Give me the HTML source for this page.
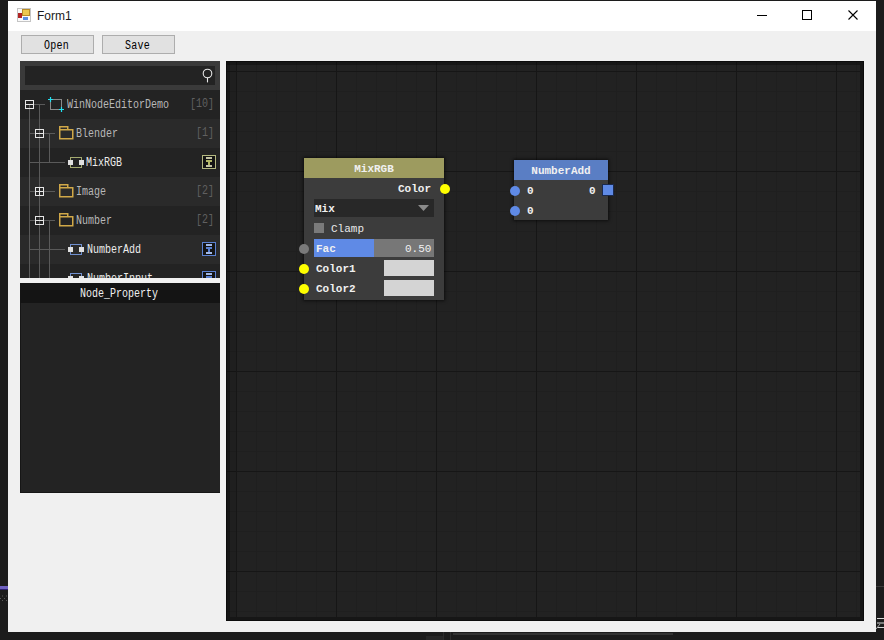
<!DOCTYPE html>
<html><head><meta charset="utf-8">
<style>
*{margin:0;padding:0;box-sizing:border-box}
html,body{width:884px;height:640px;overflow:hidden;background:#1c1c1c;position:relative}
.a{position:absolute}
.mono{font-family:"Liberation Mono",monospace}
.sans{font-family:"Liberation Sans",sans-serif}
#win{left:8px;top:1px;width:868px;height:631px;background:#f0f0f0}
#title{left:8px;top:1px;width:868px;height:30px;background:#fff}
.btn{height:19px;width:73px;top:35px;background:#e1e1e1;border:1px solid #adadad;color:#000}
.bt{position:absolute;left:0;width:71px;top:3px;font-family:"Liberation Mono",monospace;font-size:10px;line-height:12px;text-align:center;text-indent:-2px;transform:scaleY(1.2);transform-origin:0 0;letter-spacing:0.3px}
#tree{left:20px;top:61px;width:200px;height:217px;background:#232323;overflow:hidden}
#prop{left:20px;top:283px;width:200px;height:210px;background:#232323;border-left:1px solid #161616;border-bottom:1px solid #161616}
.row{position:absolute;left:0;width:200px;height:29px}
.rl{background:#2a2a2a}
.tt{position:absolute;font-family:"Liberation Mono",monospace;font-size:10px;line-height:12px;white-space:nowrap;transform:scaleY(1.2);transform-origin:0 0}
.ln{position:absolute;background:#5a5a5a}
.box{position:absolute;width:9px;height:9px;border:1px solid #e6e6e6;background:#232323}
#canvas{left:226px;top:61px;width:638px;height:560px;background:#222}
.node{position:absolute}
.nt{position:absolute;font-family:"Liberation Mono",monospace;font-weight:bold;font-size:11px;white-space:nowrap;line-height:12px}
.dot{position:absolute;width:10px;height:10px;border-radius:50%}
</style></head><body>
<div class="a" id="win"></div>
<!-- outside artifacts -->
<div class="a" style="left:0;top:586px;width:8px;height:3px;background:#6e60c0"></div>
<div class="a" style="left:0;top:589px;width:8px;height:1px;background:#2c2070"></div>
<svg class="a" style="left:0;top:595px" width="8" height="7"><path d="M2 1h1M6 1h1M0 3.5h1M4 3.5h1M2 5.5h1M6 5.5h1" stroke="#5a5a5a"/></svg>
<div class="a" style="left:876px;top:586px;width:8px;height:1px;background:#3a3a3a"></div>
<svg class="a" style="left:876px;top:615px" width="8" height="15"><path d="M1 3.5H8M1 8H8M1 12.5H8" stroke="#d8d8d8"/><path d="M0 14L4 9" stroke="#a0a0a0"/></svg>
<div class="a" style="left:453px;top:633px;width:220px;height:2px;background:#333"></div>
<div class="a" style="left:443px;top:632px;width:1px;height:8px;background:#2c2c2c"></div>
<div class="a" style="left:450px;top:632px;width:1px;height:8px;background:#2c2c2c"></div>
<div class="a" style="left:426px;top:636px;width:17px;height:4px;background:#262626"></div>

<div class="a" id="title"></div>
<!-- title icon -->
<div class="a" style="left:17px;top:8px;width:14px;height:14px;border:1px solid #c4c4c4;background:#fafafa"></div>
<div class="a" style="left:18px;top:13px;width:4px;height:5px;background:#b02424"></div>
<div class="a" style="left:22px;top:9px;width:8px;height:7px;background:#ecc850;border:1px solid #b88c28"></div>
<div class="a" style="left:23px;top:17px;width:5px;height:3px;background:#5c8ee0"></div>
<div class="a sans" style="left:37px;top:8px;font-size:12px;color:#1a1a1a;line-height:16px">Form1</div>
<!-- window controls -->
<div class="a" style="left:757px;top:15px;width:10px;height:1px;background:#000"></div>
<div class="a" style="left:802px;top:10px;width:10px;height:10px;border:1px solid #000"></div>
<svg class="a" style="left:848px;top:10px" width="11" height="11"><path d="M0.5 0.5L9.5 9.5M9.5 0.5L0.5 9.5" stroke="#000" stroke-width="1.1"/></svg>

<div class="a btn" style="left:21px"><div class="bt">Open</div></div>
<div class="a btn" style="left:102px"><div class="bt">Save</div></div>

<!-- tree panel -->
<div class="a" id="tree">
  <div class="a" style="left:0;top:0;width:200px;height:29px;background:#3a3a3a"></div>
  <div class="a" style="left:5px;top:5px;width:190px;height:19px;background:#232323"></div>
  <svg class="a" style="left:200px;top:0" width="1" height="1"></svg>
  <svg class="a" style="left:181px;top:6px" width="14" height="18"><circle cx="6.5" cy="6.5" r="4.3" fill="none" stroke="#e8e8e8" stroke-width="1.1"/><path d="M6.5 10.8v4.6" stroke="#e8e8e8" stroke-width="1.1"/></svg>
  <div class="row" style="top:29px"></div>
  <div class="row rl" style="top:58px"></div>
  <div class="row" style="top:87px"></div>
  <div class="row rl" style="top:116px"></div>
  <div class="row" style="top:145px"></div>
  <div class="row rl" style="top:174px"></div>
  <div class="row" style="top:203px"></div>
<div class="ln" style="left:9px;top:44px;width:1px;height:173px"></div>
<div class="ln" style="left:19px;top:43px;width:1px;height:174px"></div>
<div class="ln" style="left:29px;top:72px;width:1px;height:30px"></div>
<div class="ln" style="left:29px;top:159px;width:1px;height:58px"></div>
<div class="ln" style="left:14px;top:43px;width:11px;height:1px"></div>
<div class="ln" style="left:9px;top:72px;width:6px;height:1px"></div>
<div class="ln" style="left:24px;top:72px;width:11px;height:1px"></div>
<div class="ln" style="left:9px;top:101px;width:36px;height:1px"></div>
<div class="ln" style="left:9px;top:130px;width:6px;height:1px"></div>
<div class="ln" style="left:24px;top:130px;width:11px;height:1px"></div>
<div class="ln" style="left:9px;top:159px;width:6px;height:1px"></div>
<div class="ln" style="left:24px;top:159px;width:11px;height:1px"></div>
<div class="ln" style="left:9px;top:188px;width:36px;height:1px"></div>
<div class="ln" style="left:9px;top:217px;width:36px;height:1px"></div>
<svg class="a" style="left:5px;top:39px" width="9" height="9"><rect x=".5" y=".5" width="8" height="8" fill="none" stroke="#e6e6e6"/><path d="M1 4.5H8" stroke="#e6e6e6"/></svg>
<svg class="a" style="left:28px;top:36px" width="17" height="16"><rect x="2.5" y="2.5" width="11" height="10" fill="none" stroke="#8a8a8a"/><path d="M2.5 0V5M0 2.5H5M13.5 10V15M11 12.5H16" stroke="#20e0f0" stroke-width="1.2"/></svg>
<div class="tt" style="left:47px;top:37px;color:#b8b8b8">WinNodeEditorDemo</div>
<div class="tt" style="left:170px;top:36px;color:#606060">[10]</div>
<svg class="a" style="left:15px;top:68px" width="9" height="9"><rect x=".5" y=".5" width="8" height="8" fill="none" stroke="#e6e6e6"/><path d="M1 4.5H8" stroke="#e6e6e6"/></svg>
<svg class="a" style="left:39px;top:65px" width="15" height="14"><path d="M.75 3.75H13.75V12.75H.75Z" fill="none" stroke="#d0a848" stroke-width="1.5"/><path d="M.75 3.75V.75H8.75V3.75" fill="none" stroke="#d0a848" stroke-width="1.5"/></svg>
<div class="tt" style="left:56px;top:66px;color:#b8b8b8">Blender</div>
<div class="tt" style="left:176px;top:65px;color:#606060">[1]</div>
<svg class="a" style="left:48px;top:96px" width="17" height="12"><rect x="2.5" y=".5" width="11" height="10" fill="none" stroke="#a4aa70"/><rect x="0" y="3" width="5" height="5" fill="#e0e0e0"/><rect x="11" y="3" width="5" height="5" fill="#e0e0e0"/></svg>
<div class="tt" style="left:66px;top:95px;color:#ececec">MixRGB</div>
<svg class="a" style="left:182px;top:94px" width="14" height="14"><rect x=".5" y=".5" width="13" height="13" fill="#141414" stroke="#b4b880"/><rect x="4" y="2" width="6" height="2" fill="#c4c4a4"/><rect x="4" y="5" width="6" height="2" fill="#b4b868"/><rect x="6" y="7" width="2" height="3" fill="#b4b868"/><rect x="4" y="10" width="6" height="2" fill="#c4c4a4"/></svg>
<svg class="a" style="left:15px;top:126px" width="9" height="9"><rect x=".5" y=".5" width="8" height="8" fill="#2a2a2a" stroke="#e6e6e6"/><path d="M1 4.5H8M4.5 1V8" stroke="#e6e6e6"/></svg>
<svg class="a" style="left:39px;top:123px" width="15" height="14"><path d="M.75 3.75H13.75V12.75H.75Z" fill="none" stroke="#d0a848" stroke-width="1.5"/><path d="M.75 3.75V.75H8.75V3.75" fill="none" stroke="#d0a848" stroke-width="1.5"/></svg>
<div class="tt" style="left:56px;top:124px;color:#b8b8b8">Image</div>
<div class="tt" style="left:176px;top:123px;color:#606060">[2]</div>
<svg class="a" style="left:15px;top:155px" width="9" height="9"><rect x=".5" y=".5" width="8" height="8" fill="none" stroke="#e6e6e6"/><path d="M1 4.5H8" stroke="#e6e6e6"/></svg>
<svg class="a" style="left:39px;top:152px" width="15" height="14"><path d="M.75 3.75H13.75V12.75H.75Z" fill="none" stroke="#d0a848" stroke-width="1.5"/><path d="M.75 3.75V.75H8.75V3.75" fill="none" stroke="#d0a848" stroke-width="1.5"/></svg>
<div class="tt" style="left:56px;top:153px;color:#b8b8b8">Number</div>
<div class="tt" style="left:176px;top:152px;color:#606060">[2]</div>
<svg class="a" style="left:48px;top:183px" width="17" height="12"><rect x="2.5" y=".5" width="11" height="10" fill="none" stroke="#7090d0"/><rect x="0" y="3" width="5" height="5" fill="#e0e0e0"/><rect x="11" y="3" width="5" height="5" fill="#e0e0e0"/></svg>
<div class="tt" style="left:67px;top:182px;color:#ececec">NumberAdd</div>
<svg class="a" style="left:182px;top:181px" width="14" height="14"><rect x=".5" y=".5" width="13" height="13" fill="#141414" stroke="#5a80d0"/><rect x="4" y="2" width="6" height="2" fill="#a0b8e8"/><rect x="4" y="5" width="6" height="2" fill="#5a80d0"/><rect x="6" y="7" width="2" height="3" fill="#5a80d0"/><rect x="4" y="10" width="6" height="2" fill="#a0b8e8"/></svg>
<svg class="a" style="left:48px;top:212px" width="17" height="12"><rect x="2.5" y=".5" width="11" height="10" fill="none" stroke="#7090d0"/><rect x="0" y="3" width="5" height="5" fill="#e0e0e0"/><rect x="11" y="3" width="5" height="5" fill="#e0e0e0"/></svg>
<div class="tt" style="left:67px;top:211px;color:#ececec">NumberInput</div>
<svg class="a" style="left:182px;top:210px" width="14" height="14"><rect x=".5" y=".5" width="13" height="13" fill="#141414" stroke="#5a80d0"/><rect x="4" y="2" width="6" height="2" fill="#a0b8e8"/><rect x="4" y="5" width="6" height="2" fill="#5a80d0"/><rect x="6" y="7" width="2" height="3" fill="#5a80d0"/><rect x="4" y="10" width="6" height="2" fill="#a0b8e8"/></svg>
</div>
<!-- property panel -->
<div class="a" id="prop">
  <div class="a" style="left:-1px;top:0;width:200px;height:20px;background:#141414"></div>
  <div class="tt" style="left:-2px;width:200px;text-align:center;top:4px;color:#f0f0f0">Node_Property</div>
</div>

<!-- canvas -->
<svg class="a" style="left:226px;top:61px" width="638" height="560"><rect width="638" height="560" fill="#222"/><path d="M30.5 0V560M50.5 0V560M70.5 0V560M90.5 0V560M130.5 0V560M150.5 0V560M170.5 0V560M190.5 0V560M230.5 0V560M250.5 0V560M270.5 0V560M290.5 0V560M330.5 0V560M350.5 0V560M370.5 0V560M390.5 0V560M430.5 0V560M450.5 0V560M470.5 0V560M490.5 0V560M530.5 0V560M550.5 0V560M570.5 0V560M590.5 0V560M630.5 0V560M0 30.5H638M0 50.5H638M0 70.5H638M0 90.5H638M0 130.5H638M0 150.5H638M0 170.5H638M0 190.5H638M0 230.5H638M0 250.5H638M0 270.5H638M0 290.5H638M0 330.5H638M0 350.5H638M0 370.5H638M0 390.5H638M0 430.5H638M0 450.5H638M0 470.5H638M0 490.5H638M0 530.5H638M0 550.5H638" stroke="#1f1f1f" stroke-width="1"/><path d="M10.5 0V560M110.5 0V560M210.5 0V560M310.5 0V560M410.5 0V560M510.5 0V560M610.5 0V560M0 10.5H638M0 110.5H638M0 210.5H638M0 310.5H638M0 410.5H638M0 510.5H638" stroke="#161616" stroke-width="1"/><rect x="1" y="1" width="636" height="3" fill="#000" fill-opacity=".3"/><rect x="1" y="1" width="3" height="558" fill="#000" fill-opacity=".35"/><rect x="4" y="4" width="6" height="554" fill="#000" fill-opacity=".08"/><rect x="634" y="0" width="4" height="560" fill="#161616"/><rect x="0" y="556" width="638" height="4" fill="#161616"/><rect x=".5" y=".5" width="637" height="559" fill="none" stroke="#0c0c0c"/></svg>

<!-- MixRGB node -->
<div class="a" style="left:304px;top:158px;width:140px;height:142px;background:#3c3c3c;box-shadow:0 0 3px 1px rgba(0,0,0,.6)"></div>
<div class="a" style="left:304px;top:158px;width:140px;height:20px;background:#9d9b5f"></div>
<div class="nt" style="left:304px;width:140px;text-align:center;top:163px;color:#f0f0f0">MixRGB</div>
<div class="nt" style="left:398px;top:183px;color:#f0f0f0">Color</div>
<div class="dot" style="left:440px;top:184px;background:#ffff00"></div>
<div class="a" style="left:314px;top:199px;width:120px;height:18px;background:#282828"></div>
<div class="nt" style="left:315px;top:203px;color:#f0f0f0">Mix</div>
<svg class="a" style="left:418px;top:205px" width="12" height="7"><path d="M0 0H11L5.5 6Z" fill="#8a8a8a"/></svg>
<div class="a" style="left:314px;top:223px;width:10px;height:10px;background:#7a7a7a"></div>
<div class="nt" style="left:331px;top:223px;color:#e8e8e8;font-weight:normal">Clamp</div>
<div class="dot" style="left:299px;top:243.5px;background:#7a7a7a"></div>
<div class="a" style="left:314px;top:239px;width:120px;height:18px;background:#777"></div>
<div class="a" style="left:314px;top:239px;width:60px;height:18px;background:#5f8ae6"></div>
<div class="nt" style="left:316px;top:243px;color:#f0f0f0">Fac</div>
<div class="nt" style="left:405px;top:243px;color:#f0f0f0;font-weight:normal">0.50</div>
<div class="dot" style="left:299px;top:263.5px;background:#ffff00"></div>
<div class="nt" style="left:316px;top:263px;color:#f0f0f0">Color1</div>
<div class="a" style="left:384px;top:260px;width:50px;height:16px;background:#d4d4d4"></div>
<div class="dot" style="left:299px;top:283.5px;background:#ffff00"></div>
<div class="nt" style="left:316px;top:283px;color:#f0f0f0">Color2</div>
<div class="a" style="left:384px;top:280px;width:50px;height:16px;background:#d4d4d4"></div>

<!-- NumberAdd node -->
<div class="a" style="left:514px;top:160px;width:94px;height:60px;background:#3c3c3c;box-shadow:0 0 3px 1px rgba(0,0,0,.6)"></div>
<div class="a" style="left:514px;top:160px;width:94px;height:20px;background:#5a7ec4"></div>
<div class="nt" style="left:514px;width:94px;text-align:center;top:165px;color:#f0f0f0">NumberAdd</div>
<div class="dot" style="left:509.5px;top:185.5px;background:#5f8ae6"></div>
<div class="nt" style="left:527px;top:185px;color:#f0f0f0">0</div>
<div class="nt" style="left:589px;top:185px;color:#f0f0f0">0</div>
<div class="a" style="left:603px;top:185px;width:10px;height:10px;background:#5f8ae6;box-shadow:0 0 0 1px #1a2a50"></div>
<div class="dot" style="left:509.5px;top:205.5px;background:#5f8ae6"></div>
<div class="nt" style="left:527px;top:205px;color:#f0f0f0">0</div>


</body></html>
